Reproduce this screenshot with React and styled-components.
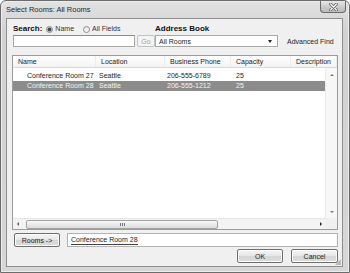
import React from 'react';
import styled, { createGlobalStyle } from 'styled-components';

const GlobalStyle = createGlobalStyle`
  html, body {
    margin: 0;
    padding: 0;
    background: #ffffff;
  }
  body {
    font-family: "Liberation Sans", Arial, sans-serif;
    font-size: 7px;
    color: #1e1e1e;
  }
`;

const columns = [
  { label: 'Name', width: 83 },
  { label: 'Location', width: 69 },
  { label: 'Business Phone', width: 66 },
  { label: 'Capacity', width: 60 },
  { label: 'Description', width: null },
];

const rooms = [
  { name: 'Conference Room 27', location: 'Seattle', phone: '206-555-6789', capacity: '25' },
  { name: 'Conference Room 28', location: 'Seattle', phone: '206-555-1212', capacity: '25', selected: true },
];

const App = () => {
  return (
    <>
      <GlobalStyle />
      <Window>
        <TitleBar>
          <Title>Select Rooms: All Rooms</Title>
          <CloseButton>
            <svg width="9" height="8" viewBox="0 0 9 8">
              <path d="M1.5 1 L7.5 7 M7.5 1 L1.5 7" stroke="#555" strokeWidth="2.6" strokeLinecap="round" />
              <path d="M1.5 1 L7.5 7 M7.5 1 L1.5 7" stroke="#fff" strokeWidth="1.2" strokeLinecap="round" />
            </svg>
          </CloseButton>
        </TitleBar>
        <Panel>
          <TopGrid>
            <SearchLine>
              <BoldLabel>Search:</BoldLabel>
              <Radio>
                <RadioDot checked />
                Name
              </Radio>
              <Radio>
                <RadioDot />
                All Fields
              </Radio>
            </SearchLine>
            <BoldLabel>Address Book</BoldLabel>
            <ControlLine>
              <TextInput />
              <SmallButton disabled>Go</SmallButton>
            </ControlLine>
            <ControlLine>
              <Select>
                All Rooms
                <DropArrow />
              </Select>
              <LinkText>Advanced Find</LinkText>
            </ControlLine>
          </TopGrid>

          <ListBox>
            <Header>
              {columns.map((c) => (
                <HeaderCell key={c.label} width={c.width}>
                  {c.label}
                </HeaderCell>
              ))}
            </Header>
            <Middle>
              <Rows>
                {rooms.map((r) => (
                  <Row key={r.name} selected={r.selected}>
                    <Cell first>{r.name}</Cell>
                    <Cell>{r.location}</Cell>
                    <Cell>{r.phone}</Cell>
                    <Cell>{r.capacity}</Cell>
                  </Row>
                ))}
              </Rows>
              <VScroll>
                <Arrow dir="up" />
                <Arrow dir="down" />
              </VScroll>
            </Middle>
            <Bottom>
              <HScroll>
                <Arrow dir="left" />
                <Thumb>
                  <Grip />
                </Thumb>
                <Arrow dir="right" />
              </HScroll>
              <Corner />
            </Bottom>
          </ListBox>

          <RoomsLine>
            <Button width={46}>Rooms -&gt;</Button>
            <Field>
              <Underlined>Conference Room 28</Underlined>
            </Field>
          </RoomsLine>

          <ActionLine>
            <Button width={46}>OK</Button>
            <Button width={47}>Cancel</Button>
          </ActionLine>
          <ResizeGrip />
        </Panel>
      </Window>
    </>
  );
};

const Window = styled.div`
  width: 350px;
  height: 273px;
  box-sizing: border-box;
  border: 1px solid #6c6c6c;
  border-radius: 6px 6px 0 0;
  background: linear-gradient(#e2e2e2, #d2d2d2 30px, #d6d6d6);
  padding: 0 6px 5px 5px;
  display: flex;
  flex-direction: column;
  box-shadow: inset 0 0 0 1px #ececec;
`;

const TitleBar = styled.div`
  height: 17px;
  display: flex;
  align-items: flex-start;
`;

const Title = styled.div`
  line-height: 17px;
  font-size: 7.5px;
  color: #262626;
`;

const CloseButton = styled.div`
  margin-left: auto;
  margin-right: -3px;
  width: 26px;
  height: 12px;
  box-sizing: border-box;
  border: 1px solid #6a6a6a;
  border-top: none;
  border-radius: 0 0 4px 4px;
  background: linear-gradient(#e9e9e9, #c9c9c9 55%, #bdbdbd);
  display: flex;
  align-items: center;
  justify-content: center;
`;

const Panel = styled.div`
  position: relative;
  flex: 1;
  box-sizing: border-box;
  border: 1px solid #8f8f8f;
  background: #f0f0f0;
  padding: 5px 4px 0 5px;
  display: flex;
  flex-direction: column;
`;

const TopGrid = styled.div`
  display: grid;
  grid-template-columns: 143px 1fr;
  grid-template-rows: 10px 12px;
  row-gap: 1px;
`;

const BoldLabel = styled.span`
  font-weight: bold;
  font-size: 8px;
  line-height: 10px;
  color: #111;
`;

const SearchLine = styled.div`
  display: flex;
  align-items: center;
  padding-left: 1px;
  gap: 4px;
`;

const Radio = styled.span`
  display: flex;
  align-items: center;
  gap: 2px;
  margin-right: 5px;
  line-height: 10px;
  color: #333;
`;

const RadioDot = styled.span`
  width: 7px;
  height: 7px;
  box-sizing: border-box;
  border-radius: 50%;
  border: 1px solid #8d8d8d;
  background: ${({ checked }) =>
    checked
      ? 'radial-gradient(circle, #4a4a4a 0 1.6px, #b9b9b9 2.1px, #f4f4f4 3px)'
      : 'linear-gradient(#e4e4e4, #fbfbfb)'};
`;

const ControlLine = styled.div`
  display: flex;
  align-items: center;
  gap: 2px;
`;

const TextInput = styled.div`
  margin-left: 1px;
  width: 122px;
  height: 12px;
  box-sizing: border-box;
  border: 1px solid #a9a9a9;
  border-top-color: #8c8c8c;
  background: #fff;
`;

const SmallButton = styled.div`
  width: 18px;
  height: 12px;
  box-sizing: border-box;
  border: 1px solid #c2c2c2;
  border-radius: 2px;
  background: #f4f4f4;
  color: ${({ disabled }) => (disabled ? '#a3a3a3' : '#222')};
  display: flex;
  align-items: center;
  justify-content: center;
`;

const Select = styled.div`
  position: relative;
  width: 123px;
  height: 12px;
  box-sizing: border-box;
  border: 1px solid #a9a9a9;
  background: #fff;
  padding-left: 3px;
  display: flex;
  align-items: center;
  color: #222;
`;

const DropArrow = styled.span`
  margin-left: auto;
  margin-right: 5px;
  width: 0;
  height: 0;
  border-left: 2.5px solid transparent;
  border-right: 2.5px solid transparent;
  border-top: 3px solid #222;
`;

const LinkText = styled.span`
  margin-left: 7px;
  color: #222;
`;

const ListBox = styled.div`
  margin-top: 8px;
  height: 175px;
  box-sizing: border-box;
  border: 1px solid #9c9c9c;
  background: #fff;
  display: flex;
  flex-direction: column;
`;

const Header = styled.div`
  height: 11px;
  flex: none;
  display: flex;
  background: linear-gradient(#ffffff, #f3f3f3);
  border-bottom: 1px solid #d8d8d8;
`;

const HeaderCell = styled.div`
  ${({ width }) => (width ? `width: ${width}px;` : 'flex: 1;')}
  box-sizing: border-box;
  padding-left: 5px;
  line-height: 11px;
  color: #222;
  border-right: 1px solid #ececec;
`;

const Middle = styled.div`
  flex: 1;
  display: flex;
  min-height: 0;
`;

const Rows = styled.div`
  flex: 1;
  padding-top: 3px;
`;

const Row = styled.div`
  height: 10px;
  display: grid;
  grid-template-columns: 86px 68px 69px 1fr;
  line-height: 10px;
  background: ${({ selected }) => (selected ? '#8c8c8c' : 'transparent')};
  color: ${({ selected }) => (selected ? '#f4f4f4' : '#1e1e1e')};
`;

const Cell = styled.div`
  padding-left: ${({ first }) => (first ? '14px' : '0')};
  white-space: nowrap;
`;

const VScroll = styled.div`
  width: 11px;
  background: #f7f7f7;
  border-left: 1px solid #ececec;
  display: flex;
  flex-direction: column;
  justify-content: space-between;
  align-items: center;
  padding: 6px 0 5px;
`;

const arrowBorders = {
  up: 'border-left: 2px solid transparent; border-right: 2px solid transparent; border-bottom: 2px solid #777;',
  down: 'border-left: 2px solid transparent; border-right: 2px solid transparent; border-top: 2px solid #777;',
  left: 'border-top: 2px solid transparent; border-bottom: 2px solid transparent; border-right: 2px solid #555;',
  right: 'border-top: 2px solid transparent; border-bottom: 2px solid transparent; border-left: 2px solid #222;',
};

const Arrow = styled.span`
  width: 0;
  height: 0;
  flex: none;
  ${({ dir }) => arrowBorders[dir]}
`;

const Bottom = styled.div`
  height: 11px;
  flex: none;
  display: flex;
`;

const HScroll = styled.div`
  flex: 1;
  display: flex;
  align-items: center;
  background: #f3f3f3;
  border-top: 1px solid #e6e6e6;
  padding: 0 4px 0 4px;
`;

const Thumb = styled.div`
  margin-left: 7px;
  width: 192px;
  height: 9px;
  box-sizing: border-box;
  border: 1px solid #a2a2a2;
  border-radius: 2px;
  background: linear-gradient(#fafafa, #e9e9e9 50%, #dcdcdc);
  display: flex;
  align-items: center;
  justify-content: center;
  margin-right: auto;
`;

const Grip = styled.span`
  width: 5px;
  height: 3px;
  background: repeating-linear-gradient(90deg, #777 0 1px, transparent 1px 2px);
`;

const Corner = styled.div`
  width: 11px;
  background: #f0f0f0;
`;

const RoomsLine = styled.div`
  margin-top: 3px;
  height: 14px;
  display: flex;
  gap: 7px;
  padding-left: 2px;
`;

const Button = styled.div`
  width: ${({ width }) => width}px;
  height: 14px;
  box-sizing: border-box;
  border: 1px solid #707070;
  border-radius: 2px;
  background: linear-gradient(#f6f6f6, #e6e6e6 50%, #d6d6d6 51%, #dcdcdc);
  box-shadow: inset 0 0 0 1px #fbfbfb;
  display: flex;
  align-items: center;
  justify-content: center;
  color: #222;
`;

const Field = styled.div`
  flex: 1;
  height: 14px;
  box-sizing: border-box;
  border: 1px solid #b3b3b3;
  background: #fff;
  padding-left: 3px;
  display: flex;
  align-items: center;
`;

const Underlined = styled.span`
  line-height: 8px;
  border-bottom: 1px solid #444;
  color: #222;
`;

const ActionLine = styled.div`
  margin-top: 2px;
  height: 14px;
  display: flex;
  justify-content: flex-end;
  gap: 8px;
`;

const ResizeGrip = styled.span`
  position: absolute;
  right: 1px;
  bottom: 1px;
  width: 6px;
  height: 6px;
  background: radial-gradient(circle, #9a9a9a 0 0.6px, transparent 0.9px) 0 0 / 2px 2px;
  clip-path: polygon(100% 0, 100% 100%, 0 100%);
`;

export default App;
